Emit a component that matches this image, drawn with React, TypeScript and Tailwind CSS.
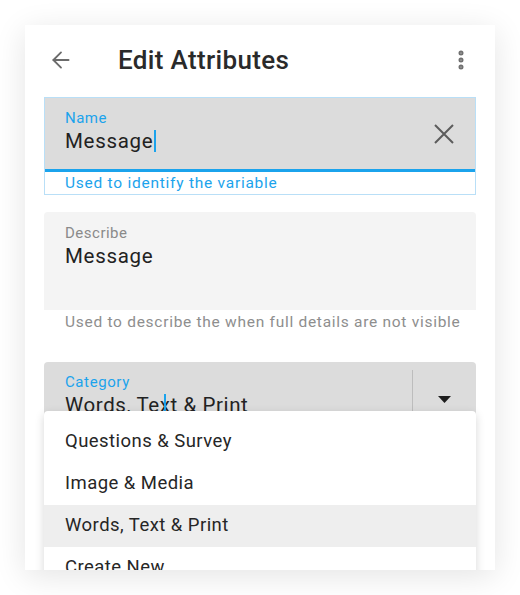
import { ArrowLeft, EllipsisVertical } from 'lucide-react';

const font = { fontFamily: 'Roboto, "Noto Sans", Arial, sans-serif' };

const menuItems = [
  'Questions & Survey',
  'Image & Media',
  'Words, Text & Print',
  'Create New',
];

function App() {
  const selected = 'Words, Text & Print';
  return (
    <div
      className="w-[520px] h-[595px] bg-white pt-[25px] pl-[25px]"
      style={font}
    >
      <div className="w-[470px] h-[545px] bg-white overflow-hidden shadow-[0_6px_30px_rgba(0,0,0,0.11)] flex flex-col">
        {/* header */}
        <div className="h-[72px] pb-[2px] flex items-center pl-[23px] pr-[24px]">
          <ArrowLeft className="w-[26px] h-[26px] text-[#6b6b6b]" strokeWidth={1.7} />
          <h1 className="ml-[44px] text-[26px] font-medium text-[#2a2a2a] tracking-[0.35px]">
            Edit Attributes
          </h1>
          <EllipsisVertical className="ml-auto mr-[-2px] w-[24px] h-[24px] text-[#707070]" strokeWidth={3} />
        </div>

        <div className="px-[19px] flex flex-col">
          {/* name field */}
          <div className="border border-[#b9dff7] flex flex-col">
            <div className="bg-[#dcdcdc] h-[71px] pt-[10px] pl-[20px] pr-[21px] flex items-start">
              <div className="flex flex-col">
                <span className="text-[15px] leading-[20px] text-[#1ba3ec] tracking-[0.5px]">Name</span>
                <span className="text-[20.5px] leading-[26px] text-[#222] tracking-[0.7px] flex items-center">
                  Message
                  <span className="inline-block w-[1.5px] h-[22px] bg-[#1ba3ec] ml-[1px]" />
                </span>
              </div>
              <svg className="ml-auto mt-[16px]" width="20" height="20" viewBox="0 0 20 20">
                <path d="M1 1L19 19M19 1L1 19" stroke="#5c5c5c" strokeWidth="2" />
              </svg>
            </div>
            <div className="h-[3px] bg-[#1ba3ec]" />
            <div className="h-[22px] pl-[20px] text-[15.5px] leading-[22px] text-[#1ba3ec] tracking-[0.75px]">
              Used to identify the variable
            </div>
          </div>

          {/* describe field */}
          <div className="mt-[17px] h-[98px] rounded-t-[4px] bg-[#f4f4f4] bg-[radial-gradient(#e9e9e9_0.6px,transparent_0.6px)] bg-[length:4px_4px] pt-[11px] pl-[21px] flex flex-col">
            <span className="text-[15px] leading-[20px] text-[#8a8a8a] tracking-[0.5px]">Describe</span>
            <span className="text-[20.5px] leading-[26px] text-[#222] tracking-[0.7px]">Message</span>
          </div>
          <div className="pt-[2px] pl-[21px] text-[15.5px] leading-[20px] text-[#8e8e8e] tracking-[0.72px]">
            Used to describe the when full details are not visible
          </div>

          {/* category field */}
          <div className="relative mt-[30px] h-[90px] rounded-t-[4px] bg-[#dcdcdc] flex">
            <div className="flex-1 pt-[10px] pl-[21px] flex flex-col relative">
              <span className="text-[15px] leading-[20px] text-[#1ba3ec] tracking-[0.6px]">Category</span>
              <span className="text-[20.5px] leading-[26px] text-[#222] tracking-[0.6px]">Words, Text &amp; Print</span>
              <span className="absolute left-[120px] top-[32px] w-[1.5px] h-[18px] bg-[#1ba3ec]" />
            </div>
            <div className="w-[64px] mt-[8px] border-l border-[#bdbdbd] flex justify-center pt-[26px] pr-[1px]">
              <svg width="13" height="7" viewBox="0 0 13 7">
                <path d="M0 0h13L6.5 7z" fill="#1e1e1e" />
              </svg>
            </div>

            {/* open menu */}
            <div className="absolute left-0 right-0 top-[49px] bg-white rounded-[4px] shadow-[0_3px_10px_rgba(0,0,0,0.16)] pt-[10px] pb-[8px]">
              {menuItems.map((item) => (
                <div
                  key={item}
                  className={
                    'h-[42px] pl-[21px] flex items-center text-[18.5px] text-[#262626] tracking-[0.45px] ' +
                    (item === selected ? 'bg-[#eeeeee]' : '')
                  }
                >
                  {item}
                </div>
              ))}
            </div>
          </div>
        </div>
      </div>
    </div>
  );
}

export default App;
